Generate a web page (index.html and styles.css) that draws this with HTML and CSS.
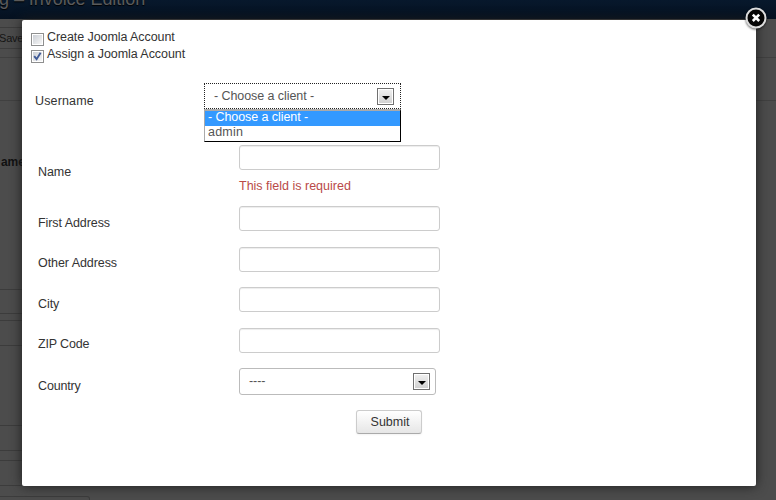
FILE: index.html
```
<!DOCTYPE html>
<html lang="en">
<head>
<meta charset="utf-8">
<title>Invoice Edition</title>
<link rel="stylesheet" href="styles.css">
</head>
<body>
<div class="page">
  <header class="page-header"><h1>g – Invoice Edition</h1></header>
  <div class="toolbar"><span class="save">Save</span></div>
  <div class="subhead"></div>
  <div class="content">
    <div class="spacer"><b>ame</b></div>
    <div class="line-box box-one"></div>
    <div class="line-box box-two"></div>
    <div class="line-box box-three"></div>
    <div class="line-box box-four"></div>
    <div class="line-box box-five"></div>
  </div>
</div>
<main class="modal">
  <form class="account">
    <label class="check"><span class="box"></span><span>Create Joomla Account</span></label>
    <label class="check second"><span class="box"><svg viewBox="0 0 9 9"><path d="M1.2 4.2 3.6 7.2 7.6 .8" /></svg></span><span>Assign a Joomla Account</span></label>
    <div class="user-row">
      <label class="user-label">Username</label>
      <div class="combo">
        <div class="select focused"><span>- Choose a client -</span><i class="arrow"></i></div>
        <div class="options"><div class="active">- Choose a client -</div><div>admin</div></div>
      </div>
    </div>
    <div class="row name-row"><label>Name</label><div><input type="text"><p class="error">This field is required</p></div></div>
    <div class="row first-row"><label>First Address</label><input type="text"></div>
    <div class="row other-row"><label>Other Address</label><input type="text"></div>
    <div class="row city-row"><label>City</label><input type="text"></div>
    <div class="row zip-row"><label>ZIP Code</label><input type="text"></div>
    <div class="row country-row"><label>Country</label><div class="select"><span>----</span><i class="arrow"></i></div></div>
    <button type="button" class="submit">Submit</button>
  </form>
  <svg class="close" viewBox="0 0 24 24"><circle cx="12" cy="12" r="9.5" /><path d="m8.8 8.6 6.4 6.4m0-6.4-6.4 6.4" /></svg>
</main>
</body>
</html>
```
FILE: styles.css
```
* { box-sizing: border-box; }
body {
  margin: 0;
  width: 776px;
  height: 500px;
  overflow: hidden;
  position: relative;
  background: #4c4c4c;
  color: #333;
  font: 12.5px/18px "Liberation Sans", Arial, sans-serif;
  letter-spacing: -.07px;
}
.page { height: 500px; overflow: hidden; }
.page-header {
  height: 19px;
  overflow: hidden;
  background: linear-gradient(#07182c, #051120);
}
.page-header h1 {
  margin: -11px 0 0 -1px;
  font-size: 18px;
  line-height: 20px;
  font-weight: normal;
  letter-spacing: -.05px;
  color: #5a5a5a;
  text-shadow: 0 1px 1px #000;
}
.toolbar { height: 39px; padding-top: 8px; border-bottom: 1px solid #404040; }
.save {
  display: block;
  width: 32px;
  height: 22px;
  margin-left: -1px;
  border: 1px solid #3c3c3c;
  border-left: 0;
  font-size: 11px;
  line-height: 20px;
  letter-spacing: -.2px;
  color: #141414;
}
.subhead { height: 43px; border-bottom: 1px solid #404040; }
.spacer { height: 188px; padding: 52px 0 0 1px; color: #111; font-size: 12px; }
.line-box { width: 90px; border: solid #3c3c3c; border-width: 1px 1px 1px 0; border-radius: 0 3px 3px 0; }
.box-one { height: 25px; }
.box-two { height: 26px; margin-top: 6px; }
.box-three { height: 26px; margin-top: 79px; }
.box-four { height: 26px; margin-top: 9px; }
.box-five { height: 26px; margin-top: 10px; }
.modal {
  position: absolute;
  left: 22px;
  top: 20px;
  width: 734px;
  height: 466px;
  background: #fff;
  border-radius: 2px;
  box-shadow: 0 0 12px #1c1c1c;
}
.account { padding: 8px 0 0 9px; }
.check { display: flex; height: 17px; line-height: 18px; gap: 3px; }
.box {
  width: 13px;
  height: 13px;
  margin-top: 5px;
  border: 1px solid #8e8f8f;
  background: linear-gradient(135deg, #cbcfd5, #f6f6f6) content-box #f8f8f8;
  padding: 1px;
}
.box svg { display: block; width: 9px; height: 9px; fill: none; stroke: #405b97; stroke-width: 1.9; }
.user-row { display: flex; margin: 21px 0 0 4px; height: 62px; }
.user-label { width: 169px; padding-top: 9px; letter-spacing: .15px; }
.combo { width: 197px; }
.select {
  display: flex;
  align-items: center;
  justify-content: space-between;
  width: 197px;
  height: 27px;
  padding: 0 5px 0 9px;
  border: 1px solid #bbb;
  border-radius: 3px;
  background: #fff;
  color: #555;
}
.select span { padding-bottom: 2px; white-space: pre; }
.focused { border: 1px dotted #222; border-radius: 0; height: 26px; padding-right: 6px; }
.focused span { padding-bottom: 0; }
.arrow {
  display: flex;
  justify-content: center;
  width: 17px;
  height: 17px;
  border: 1px solid #707070;
  box-shadow: inset 0 0 0 1px #fff;
  background: linear-gradient(#f1f1f1, #cfcfcf);
}
.focused .arrow { margin-top: 1px; }
.arrow::after { content: ""; margin-top: 7px; height: 0; border: solid transparent; border-width: 4px 4px 0; border-top-color: #000; }
.options {
  width: 197px;
  height: 33px;
  border: 1px solid #000;
  border-top: 2px solid #aaa;
  border-left-color: #aaa;
  line-height: 13px;
  color: #555;
}
.options div { height: 15px; padding-left: 3px; }
.options .active { background: #39f; color: #fff; }
.options div:last-child { letter-spacing: .2px; }
.row { display: flex; margin-left: 7px; }
.row > label { width: 201px; flex: none; }
.row input {
  display: block;
  width: 201px;
  height: 25px;
  border: 1px solid #ccc;
  border-radius: 3px;
  box-shadow: inset 0 1px 1px #00000013;
}
.name-row { height: 61px; }
.name-row label { padding-top: 18px; }
.error { margin: 7px 0 0; color: #b94a48; letter-spacing: 0; }
.first-row { height: 41px; }
.first-row label, .other-row label, .city-row label, .zip-row label { padding-top: 8px; }
.other-row { height: 40px; }
.other-row label { padding-top: 7px; }
.city-row { height: 41px; }
.zip-row { height: 40px; padding: 0; }
.zip-row label { padding-top: 7px; letter-spacing: -.15px; }
.country-row { height: 42px; }
.country-row label { padding-top: 9px; letter-spacing: -.15px; }
.submit {
  display: block;
  width: 66px;
  height: 24px;
  margin-left: 325px;
  padding: 0 0 1px 2px;
  border: 1px solid #ccc;
  border-bottom-color: #aaa;
  border-radius: 3px;
  background: linear-gradient(#fff, #e6e6e6);
  box-shadow: 0 1px 2px #0000000d;
  font: inherit;
  color: #333;
}
.close { position: absolute; left: 722px; top: -14px; width: 24px; height: 24px; filter: drop-shadow(0 1px 1px #0009); }
.close circle { fill: #050505; stroke: #ddd; stroke-width: 2; }
.close path { fill: none; stroke: #fff; stroke-width: 2.6; }
```
